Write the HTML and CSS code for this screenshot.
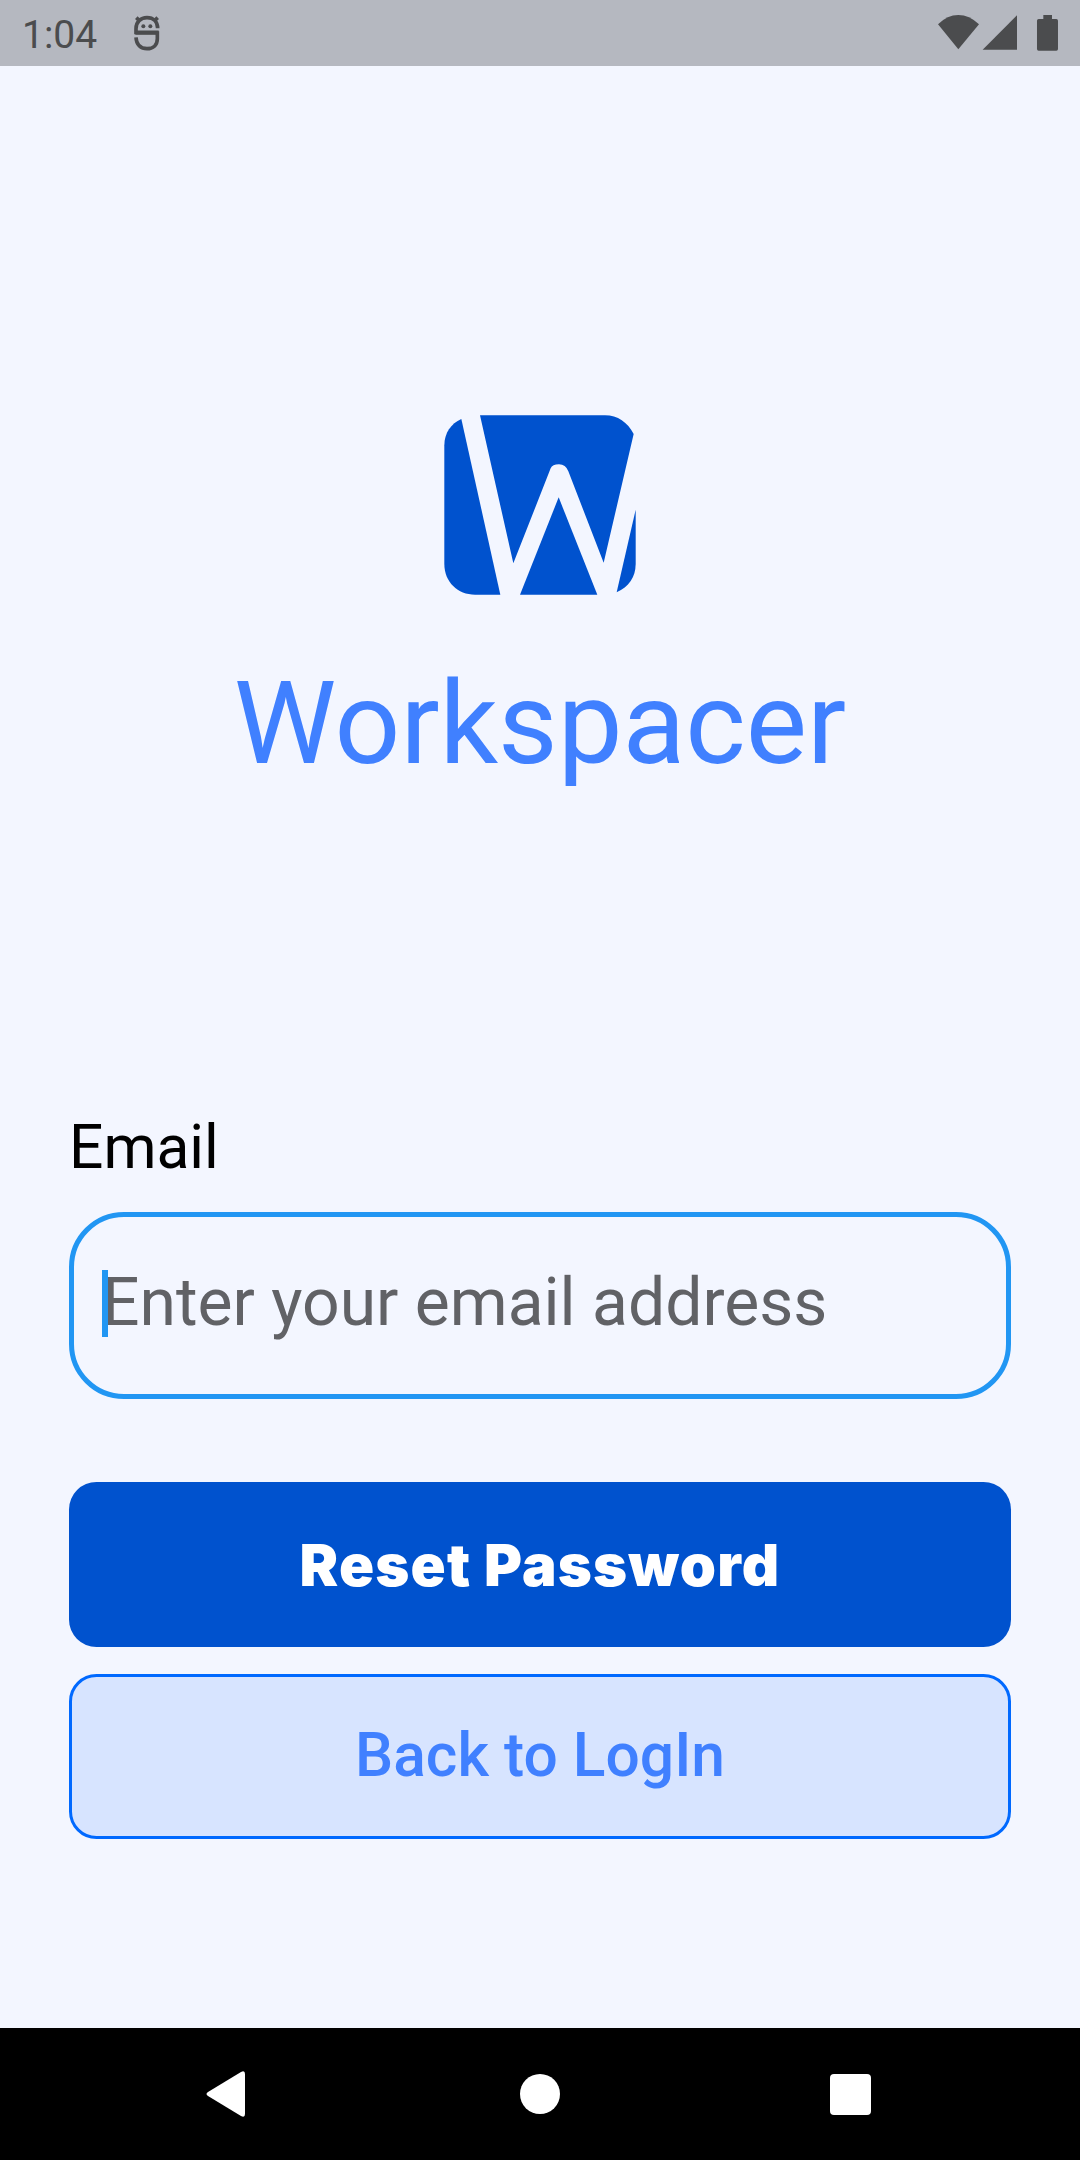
FILE: index.html
```html
<!DOCTYPE html>
<html lang="en">
<head>
<meta charset="utf-8">
<title>Workspacer</title>
<link rel="stylesheet" href="styles.css">
</head>
<body>
<div class="screen">
  <header class="status">
    <div class="status-left">
      <span class="clock">1:04</span>
      <svg class="bug" viewBox="0 0 78 108" width="26" height="36">
        <g fill="none" stroke="#4b4c4e" stroke-width="11">
          <path d="M74 52H6V41C6 21 20 8 39 8s32 12 32 32"/>
          <path d="M4 54H70V71C70 90 57 101 39 101S7 90 6 67"/>
          <path d="M7 8l10 10M71 8L61 18"/>
        </g>
        <circle cx="28" cy="34" r="6" fill="#4b4c4e"/><circle cx="49" cy="34" r="6" fill="#4b4c4e"/>
      </svg>
    </div>
    <svg class="indicators" viewBox="0 0 362 108" width="120.667" height="36" fill="#4b4c4e">
      <path d="M0 28Q28 0 61 0t62 28L61 103z"/>
      <path d="M134 104L237 1V104z"/>
      <path d="M316 0h26v12h13q5 0 5 5v85q0 5-5 5h-53q-5 0-5-5V17q0-5 5-5h14z"/>
    </svg>
  </header>
  <main class="content">
    <svg class="logo" viewBox="42 44 576 540" width="192" height="180" fill="#0052ce">
      <path d="M94 56L211 583H135C83 583 43 545 43 491V135C43 98 63 70 94 56z"/>
      <path d="M150 45H525C563 45 593 66 611 101L521 487L415 213Q407 192 387 192T362 204L250 489z"/>
      <path d="M386 291L502 583H270z"/>
      <path d="M617 328V491C617 530 596 560 560 576z"/>
    </svg>
    <h1 class="brand">Workspacer</h1>
    <form class="form">
      <label class="label" for="email">Email</label>
      <div class="field">
        <input class="input" id="email" type="text" placeholder="Enter your email address">
        <span class="caret"></span>
      </div>
      <button class="button primary" type="button">Reset Password</button>
      <button class="button secondary" type="button">Back to LogIn</button>
    </form>
  </main>
  <nav class="navbar">
    <svg viewBox="0 0 39 46" width="39" height="46"><path d="M2 21L35 1q4-2 4 2v40q0 4-4 2L2 25q-3-2 0-4z" fill="#fff"/></svg>
    <svg class="home" viewBox="0 0 40 40" width="40" height="40"><circle cx="20" cy="20" r="20" fill="#fff"/></svg>
    <svg viewBox="0 0 41 41" width="41" height="41"><rect width="41" height="41" rx="4" fill="#fff"/></svg>
  </nav>
</div>
</body>
</html>
```
FILE: styles.css
```css
* { box-sizing: border-box; }
body { margin: 0; font-family: Roboto, sans-serif; }
.screen { display: flex; flex-direction: column; width: 1080px; height: 2160px; background: #f3f6ff; }
.status { display: flex; justify-content: space-between; height: 66px; padding: 15px 21.3px 0 22px; background: #b5b8c0; }
.status-left { display: flex; gap: 37px; }
.clock { font-size: 39px; line-height: 40px; color: #4b4c4e; }
.content { display: flex; flex: 1; flex-direction: column; align-items: center; padding: 349px 69px 0; }
.logo { display: block; }
.brand { margin: 61px 0 0; font-size: 115.5px; line-height: 136px; font-weight: 400; color: #4080ff; }
.form { display: flex; flex-direction: column; width: 942px; margin-top: 320px; }
.label { font-size: 60.5px; line-height: 72px; color: #000; }
.field { position: relative; height: 187px; margin-top: 28px; border: 5px solid #2196f3; border-radius: 55px; }
.input { display: block; width: 100%; height: 100%; padding: 0 28px 7px; border: 0; outline: 0; background: none; font: 66px Roboto, sans-serif; color: #000; }
.input::placeholder { color: #616266; opacity: 1; }
.caret { position: absolute; left: 28px; top: 53px; width: 6px; height: 67px; background: #2196f3; }
.button { display: flex; align-items: center; justify-content: center; height: 165px; padding: 0; border-radius: 27.5px; }
.primary { margin-top: 83px; border: 0; background: #0052ce; color: #fff; font: 900 58px Inter, sans-serif; letter-spacing: 1.2px; }
.secondary { margin-top: 27px; padding-bottom: 2px; border: 3px solid #0069ff; background: #d7e4ff; color: #4080ff; font: 500 60.5px Roboto, sans-serif; }
.navbar { display: flex; align-items: center; justify-content: space-between; height: 132px; padding: 0 209px 0 206px; background: #000; }
.home { margin-left: 4px; }
```
